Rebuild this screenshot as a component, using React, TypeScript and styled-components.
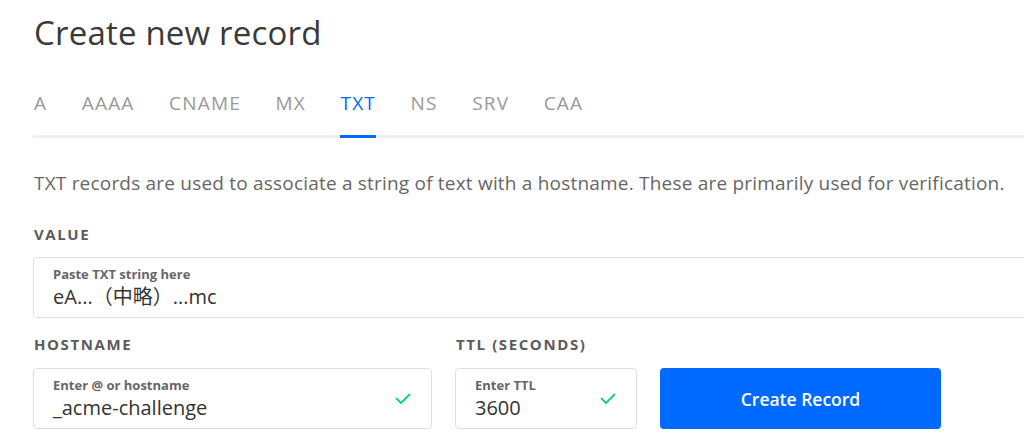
import React from "react";
import styled, { createGlobalStyle } from "styled-components";

const GlobalStyle = createGlobalStyle`
  html, body {
    margin: 0;
    padding: 0;
    background: #ffffff;
    overflow: hidden;
  }
  body {
    font-family: "Open Sans", "Noto Sans CJK JP", sans-serif;
    color: #333333;
  }
  * { box-sizing: border-box; }
`;

const Page = styled.div`
  width: 1100px;
  padding: 13px 0 0 33px;
`;

const Title = styled.h1`
  margin: 0;
  font-size: 33px;
  line-height: 40px;
  font-weight: 400;
  letter-spacing: 0.2px;
  color: #3a3a3a;
  padding-left: 1px;
`;

const TabBar = styled.nav`
  display: flex;
  gap: 34.5px;
  margin-top: 38px;
  border-bottom: 3px solid #efefef;
  padding-left: 1px;
`;

const Tab = styled.div<{ $active?: boolean }>`
  font-size: 19px;
  line-height: 24px;
  letter-spacing: 1.2px;
  padding-bottom: 20px;
  margin-bottom: -3px;
  color: ${(p) => (p.$active ? "#0069ff" : "#999999")};
  border-bottom: 3px solid ${(p) => (p.$active ? "#0069ff" : "transparent")};
`;

const Description = styled.p`
  margin: 33px 0 0;
  padding-left: 1px;
  font-size: 19px;
  line-height: 24px;
  letter-spacing: 0.2px;
  color: #666666;
`;

const FieldLabel = styled.div<{ $gap?: number }>`
  font-size: 15px;
  line-height: 18px;
  font-weight: 700;
  letter-spacing: 1.6px;
  text-transform: uppercase;
  color: #5b5b5b;
  margin-bottom: ${(p) => p.$gap ?? 15}px;
  padding-left: 1px;
`;

const ValueLabel = styled(FieldLabel)`
  margin-top: 30px;
`;

const InputBox = styled.div`
  display: flex;
  align-items: center;
  height: 61px;
  border: 1px solid #dfdfdf;
  border-radius: 4px;
  padding: 0 20px 0 19px;
  background: #ffffff;
`;

const InputText = styled.div`
  flex: 1;
  display: flex;
  flex-direction: column;
  gap: 3px;
  min-width: 0;
`;

const InputLabel = styled.span`
  font-size: 13px;
  line-height: 16px;
  font-weight: 700;
  color: #666666;
`;

const InputValue = styled.span`
  font-size: 20px;
  line-height: 24px;
  color: #333333;
  white-space: nowrap;
`;

const Row = styled.div`
  display: flex;
  align-items: flex-end;
  gap: 23px;
  margin-top: 17px;
`;

const Field = styled.div<{ $width: number }>`
  width: ${(p) => p.$width}px;
`;

const SubmitButton = styled.button`
  width: 281px;
  height: 61px;
  border: none;
  border-radius: 4px;
  background: #0069ff;
  color: #ffffff;
  font-family: "Open Sans", sans-serif;
  font-size: 17.5px;
  font-weight: 600;
  cursor: pointer;
`;

const Check = () => (
  <svg width="16" height="12" viewBox="0 0 16 12" fill="none">
    <polyline
      points="1.5,5.5 6,10 14.5,1.5"
      stroke="#15cd72"
      strokeWidth="1.8"
      strokeLinecap="round"
      strokeLinejoin="round"
    />
  </svg>
);

const tabs = ["A", "AAAA", "CNAME", "MX", "TXT", "NS", "SRV", "CAA"];

export default function App() {
  return (
    <>
      <GlobalStyle />
      <Page>
        <Title>Create new record</Title>
        <TabBar>
          {tabs.map((t) => (
            <Tab key={t} $active={t === "TXT"}>
              {t}
            </Tab>
          ))}
        </TabBar>
        <Description>
          TXT records are used to associate a string of text with a hostname.
          These are primarily used for verification.
        </Description>
        <ValueLabel $gap={14}>Value</ValueLabel>
        <InputBox>
          <InputText>
            <InputLabel>Paste TXT string here</InputLabel>
            <InputValue>eA...（中略）...mc</InputValue>
          </InputText>
        </InputBox>
        <Row>
          <Field $width={399}>
            <FieldLabel>Hostname</FieldLabel>
            <InputBox>
              <InputText>
                <InputLabel>Enter @ or hostname</InputLabel>
                <InputValue>_acme-challenge</InputValue>
              </InputText>
              <Check />
            </InputBox>
          </Field>
          <Field $width={182}>
            <FieldLabel>TTL (seconds)</FieldLabel>
            <InputBox>
              <InputText>
                <InputLabel>Enter TTL</InputLabel>
                <InputValue>3600</InputValue>
              </InputText>
              <Check />
            </InputBox>
          </Field>
          <SubmitButton>Create Record</SubmitButton>
        </Row>
      </Page>
    </>
  );
}
